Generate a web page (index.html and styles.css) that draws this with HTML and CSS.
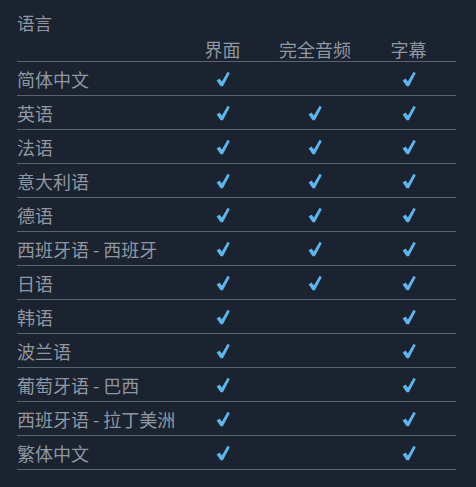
FILE: index.html
```html
<!DOCTYPE html>
<html lang="zh">
<head>
    <meta charset="UTF-8">
    <title>语言</title>
    <link rel="stylesheet" href="styles.css">
</head>
<body>
    <div class="lang-block">
        <div class="lang-title">语言</div>
        <div class="lang-table">
            <div class="lang-row lang-head">
                <span></span>
                <span class="col">界面</span>
                <span class="col">完全音频</span>
                <span class="col">字幕</span>
            </div>
        </div>
    </div>

    <svg style="display:none">
        <symbol id="check" viewBox="0 0 14 16">
            <path d="M0.6 9.4 L3.6 7.6 L5.9 10.6 L11.6 0.8 L13.8 2.2 L6.9 15.2 L4.6 15.2 Z"/>
        </symbol>
    </svg>

    <script>
        // name, ui, audio, subs
        const langs = [
            ['简体中文', 1, 0, 1],
            ['英语', 1, 1, 1],
            ['法语', 1, 1, 1],
            ['意大利语', 1, 1, 1],
            ['德语', 1, 1, 1],
            ['西班牙语 - 西班牙', 1, 1, 1],
            ['日语', 1, 1, 1],
            ['韩语', 1, 0, 1],
            ['波兰语', 1, 0, 1],
            ['葡萄牙语 - 巴西', 1, 0, 1],
            ['西班牙语 - 拉丁美洲', 1, 0, 1],
            ['繁体中文', 1, 0, 1]
        ];
        const table = document.querySelector('.lang-table');
        langs.forEach(l => {
            const row = document.createElement('div');
            row.className = 'lang-row';
            let html = '<span class="name">' + l[0] + '</span>';
            for (let i = 1; i < 4; i++) {
                html += '<span class="col">' + (l[i] ? '<svg class="check"><use href="#check"/></svg>' : '') + '</span>';
            }
            row.innerHTML = html;
            table.appendChild(row);
        });
    </script>
</body>
</html>
```

FILE: styles.css
```css
html, body {
    margin: 0;
    padding: 0;
}
body {
    background-color: #1b2230;
    font-family: "Noto Sans CJK SC", "Noto Sans", sans-serif;
    color: #8f98a0;
    width: 476px;
    height: 487px;
    overflow: hidden;
}
.lang-block {
    padding: 11px 20px 0 17px;
}
.lang-title {
    font-size: 17.5px;
    line-height: 24px;
    height: 26px;
}
.lang-table {
    display: flex;
    flex-direction: column;
}
.lang-row {
    display: grid;
    grid-template-columns: 159px 93px 92px 1fr;
    align-items: center;
    height: 33px;
    border-bottom: 1px solid #5a626d;
    font-size: 18px;
}
.lang-head {
    height: 24px;
    align-items: end;
    line-height: 24px;
}
.col {
    text-align: center;
    display: flex;
    justify-content: center;
    align-items: center;
}
.name {
    white-space: nowrap;
}
.check {
    width: 14px;
    height: 16px;
    fill: #5cb6ee;
}
```
